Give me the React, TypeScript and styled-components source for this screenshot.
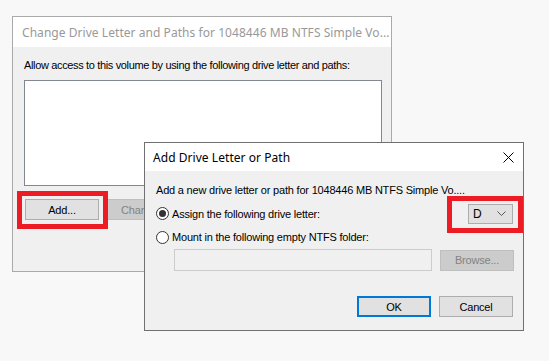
import React from "react";
import styled, { createGlobalStyle } from "styled-components";

const Global = createGlobalStyle`
  html, body { margin: 0; padding: 0; }
  body {
    width: 549px; height: 361px; overflow: hidden;
    background: #f8f8f8;
    font-family: "Liberation Sans", Arial, sans-serif;
  }
`;

const Desktop = styled.div`
  position: relative;
  width: 549px;
  height: 361px;
  background: #f8f8f8;
`;

const Window = styled.div<{ $left: number; $top: number; $w: number; $h: number; $active?: boolean }>`
  position: absolute;
  left: ${(p) => p.$left}px;
  top: ${(p) => p.$top}px;
  width: ${(p) => p.$w}px;
  height: ${(p) => p.$h}px;
  box-sizing: border-box;
  border: 1px solid ${(p) => (p.$active ? "#707070" : "#aaaaaa")};
  background: #f0f0f0;
  display: flex;
  flex-direction: column;
`;

const TitleBar = styled.div<{ $h: number; $pad: number; $active?: boolean }>`
  height: ${(p) => p.$h}px;
  flex: none;
  background: #ffffff;
  display: flex;
  align-items: center;
  justify-content: space-between;
  padding-left: ${(p) => p.$pad}px;
  padding-right: ${(p) => (p.$active ? 9 : 10)}px;
  font-family: "Noto Sans", "Open Sans", sans-serif;
  font-size: 12px;
  color: ${(p) => (p.$active ? "#000000" : "#999999")};
  white-space: nowrap;
`;

const TitleText = styled.span`
  letter-spacing: 0.05px;
`;

const CloseIcon = ({ color }: { color: string }) => (
  <svg width="11" height="11" viewBox="0 0 11 11">
    <path d="M0.5 0.5 L10.5 10.5 M10.5 0.5 L0.5 10.5" stroke={color} strokeWidth="1" fill="none" />
  </svg>
);

const Body = styled.div<{ $pt: number; $pl: number; $pr: number }>`
  display: flex;
  flex-direction: column;
  padding: ${(p) => p.$pt}px ${(p) => p.$pr}px 0 ${(p) => p.$pl}px;
  font-size: 11px;
  letter-spacing: -0.2px;
  color: #000;
`;

const Label = styled.div<{ $ls?: number }>`
  height: 14px;
  line-height: 14px;
  white-space: nowrap;
  letter-spacing: ${(p) => p.$ls ?? -0.2}px;
`;

const ListBox = styled.div`
  margin-top: 8px;
  width: 358px;
  height: 106px;
  box-sizing: border-box;
  background: #ffffff;
  border: 1px solid #828790;
`;

const Row = styled.div<{ $mt: number; $h: number; $ml?: number; $gap?: number; $end?: boolean }>`
  margin-top: ${(p) => p.$mt}px;
  margin-left: ${(p) => p.$ml ?? 0}px;
  height: ${(p) => p.$h}px;
  display: flex;
  align-items: center;
  gap: ${(p) => p.$gap ?? 0}px;
  justify-content: ${(p) => (p.$end ? "flex-end" : "flex-start")};
`;

const Button = styled.div<{ $disabled?: boolean; $default?: boolean }>`
  width: 74px;
  height: 21px;
  box-sizing: border-box;
  display: flex;
  align-items: center;
  justify-content: center;
  font-size: 11px;
  flex: none;
  background: ${(p) => (p.$disabled ? "#cccccc" : "#e1e1e1")};
  border: ${(p) => (p.$default ? "2px solid #0078d7" : p.$disabled ? "1px solid #bfbfbf" : "1px solid #adadad")};
  color: ${(p) => (p.$disabled ? "#838383" : "#000")};
`;

const RadioLabel = styled.label`
  display: flex;
  align-items: center;
  gap: 3px;
  white-space: nowrap;
`;

const RadioCircle = styled.span<{ $checked?: boolean }>`
  width: 13px;
  height: 13px;
  box-sizing: border-box;
  border-radius: 50%;
  border: 1px solid #333333;
  background: #ffffff;
  display: flex;
  align-items: center;
  justify-content: center;
  flex: none;
  &::after {
    content: "";
    display: ${(p) => (p.$checked ? "block" : "none")};
    width: 7px;
    height: 7px;
    border-radius: 50%;
    background: #333333;
  }
`;

const Combo = styled.div`
  margin-left: auto;
  width: 45px;
  height: 20px;
  box-sizing: border-box;
  border: 1px solid #adadad;
  background: #e1e1e1;
  display: flex;
  align-items: center;
  justify-content: space-between;
  padding: 0 6px 0 4px;
  font-size: 12px;
  letter-spacing: 0;
`;

const TextField = styled.div`
  width: 258px;
  height: 22px;
  box-sizing: border-box;
  border: 1px solid #cccccc;
  background: #f0f0f0;
  flex: none;
`;

const Highlight = styled.div<{ $left: number; $top: number; $w: number; $h: number }>`
  position: absolute;
  left: ${(p) => p.$left}px;
  top: ${(p) => p.$top}px;
  width: ${(p) => p.$w}px;
  height: ${(p) => p.$h}px;
  box-sizing: border-box;
  border: 5px solid #ed1c24;
  pointer-events: none;
`;

export default function App() {
  return (
    <Desktop>
      <Global />
      <Window $left={12} $top={16} $w={380} $h={256}>
        <TitleBar $h={30} $pad={9}>
          <TitleText>Change Drive Letter and Paths for 1048446 MB NTFS Simple Vo...</TitleText>
          <CloseIcon color="#999999" />
        </TitleBar>
        <Body $pt={11} $pl={11} $pr={9}>
          <Label $ls={-0.35}>Allow access to this volume by using the following drive letter and paths:</Label>
          <ListBox />
          <Row $mt={13} $h={21} $ml={1} $gap={8}>
            <Button>Add...</Button>
            <Button $disabled>Change...</Button>
          </Row>
        </Body>
      </Window>

      <Window $left={144} $top={142} $w={380} $h={189} $active>
        <TitleBar $h={28} $pad={8} $active>
          <TitleText>Add Drive Letter or Path</TitleText>
          <CloseIcon color="#000000" />
        </TitleBar>
        <Body $pt={12} $pl={11} $pr={10}>
          <Label>Add a new drive letter or path for 1048446 MB NTFS Simple Vo....</Label>
          <Row $mt={6} $h={21}>
            <RadioLabel>
              <RadioCircle $checked />
              Assign the following drive letter:
            </RadioLabel>
            <Combo>
              <span>D</span>
              <svg width="9" height="5" viewBox="0 0 9 5">
                <path d="M0.5 0.5 L4.5 4.5 L8.5 0.5" stroke="#555" strokeWidth="1" fill="none" />
              </svg>
            </Combo>
          </Row>
          <Row $mt={5} $h={16}>
            <RadioLabel>
              <RadioCircle />
              Mount in the following empty NTFS folder:
            </RadioLabel>
          </Row>
          <Row $mt={4} $h={22} $ml={18} $gap={8}>
            <TextField />
            <Button $disabled>Browse...</Button>
          </Row>
          <Row $mt={25} $h={21} $gap={8} $end>
            <Button $default>OK</Button>
            <Button>Cancel</Button>
          </Row>
        </Body>
      </Window>

      <Highlight $left={17} $top={191} $w={91} $h={38} />
      <Highlight $left={447} $top={196} $w={76} $h={37} />
    </Desktop>
  );
}
